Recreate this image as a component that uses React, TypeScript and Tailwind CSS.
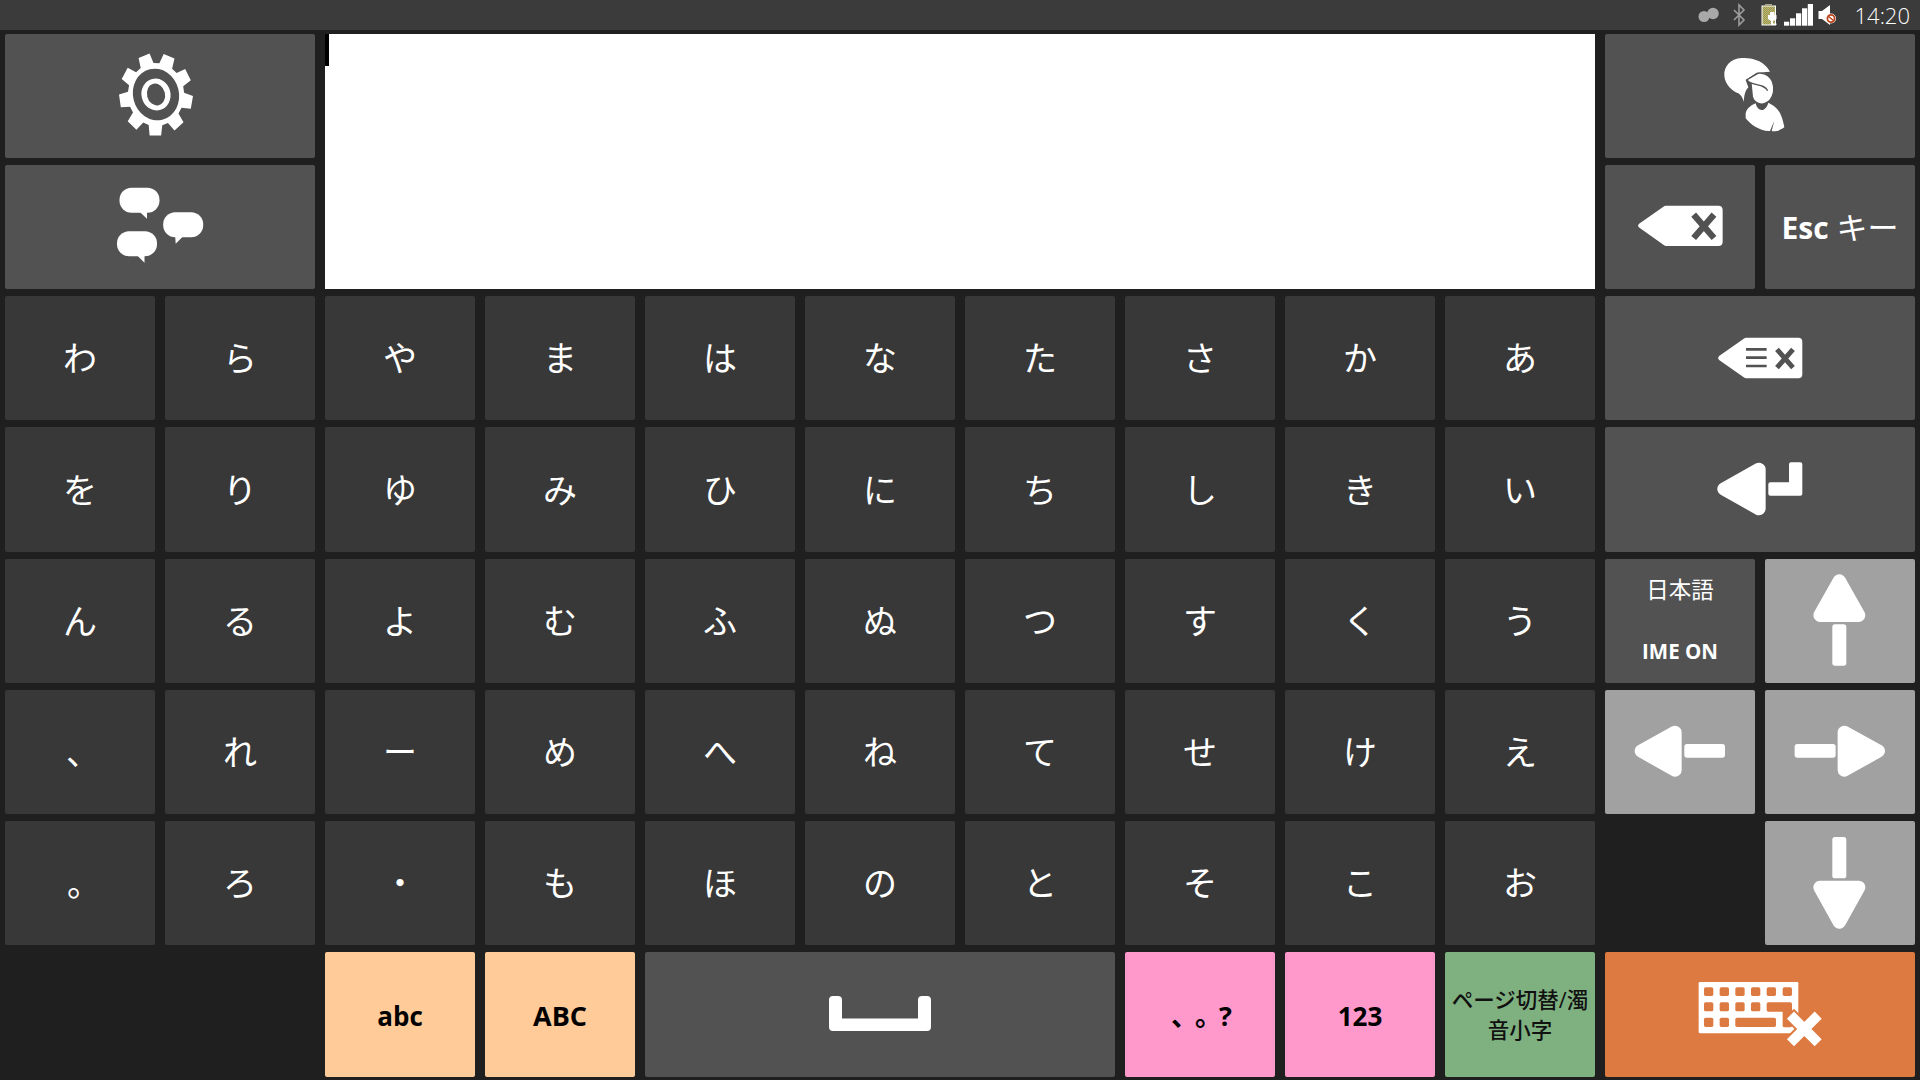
import type { ReactNode } from 'react'

const kanaRows = [
  ['わ', 'ら', 'や', 'ま', 'は', 'な', 'た', 'さ', 'か', 'あ'],
  ['を', 'り', 'ゆ', 'み', 'ひ', 'に', 'ち', 'し', 'き', 'い'],
  ['ん', 'る', 'よ', 'む', 'ふ', 'ぬ', 'つ', 'す', 'く', 'う'],
  ['、', 'れ', 'ー', 'め', 'へ', 'ね', 'て', 'せ', 'け', 'え'],
  ['。', 'ろ', '・', 'も', 'ほ', 'の', 'と', 'そ', 'こ', 'お'],
]

const DARK = '#525252'
const ORANGE = '#dd7a41'

// 9 toothed gear, squashed a bit like the original artwork
function gearPath(cx: number, cy: number, rx: number, ry: number) {
  const pts: string[] = []
  const at = (deg: number, r: number) => {
    const a = (deg * Math.PI) / 180
    return `${(cx + Math.cos(a) * rx * r).toFixed(1)} ${(cy + Math.sin(a) * ry * r).toFixed(1)}`
  }
  for (let i = 0; i < 9; i++) {
    const c = -109 + i * 40
    pts.push(at(c - 14, 0.76), at(c - 9, 1), at(c + 9, 1), at(c + 14, 0.76))
  }
  return `M${pts.join(' L')} Z`
}

function Key({ className, children }: { className: string; children?: ReactNode }) {
  return (
    <div className={`flex items-center justify-center rounded-[2px] overflow-hidden min-h-0 ${className}`}>
      {children}
    </div>
  )
}

// icons are drawn in the page's own pixel coordinates, box = key's rect
function Icon({ box, children }: { box: string; children: ReactNode }) {
  return (
    <svg viewBox={box} className="block w-full h-full" fill="#fff">
      {children}
    </svg>
  )
}

function Bubble({ x, y, tail }: { x: number; y: number; tail: string }) {
  return (
    <g transform={`translate(${x} ${y})`}>
      <rect width="40" height="25" rx="12" />
      <path d={tail} />
    </g>
  )
}

function StatusIcons() {
  return (
    <svg viewBox="1695 0 145 30" className="w-[145px] h-[30px] block">
      <defs>
        <pattern id="dither" width="2" height="2" patternUnits="userSpaceOnUse">
          <rect width="2" height="2" fill="#7ea65c" />
          <rect width="1" height="1" fill="#d8a765" />
          <rect x="1" y="1" width="1" height="1" fill="#d8a765" />
        </pattern>
      </defs>
      {/* link */}
      <g fill="#a9a9a9">
        <circle cx="1704" cy="16.5" r="5.5" />
        <circle cx="1713" cy="13.5" r="5.8" />
        <path d="M1704 16.5 L1713 13.5" stroke="#a9a9a9" strokeWidth="6" />
      </g>
      {/* bluetooth */}
      <path d="M1734 10 L1744 20 L1739 25 L1739 5 L1744 10 L1734 20" fill="none" stroke="#9c9c9c" strokeWidth="1.6" />
      {/* battery charging */}
      <rect x="1762" y="6" width="13.5" height="19" fill="url(#dither)" stroke="#fff" strokeWidth="1" />
      <rect x="1765" y="4" width="7" height="2" fill="#a9a98a" />
      <path d="M1770 12 V15 H1768 V19 L1771 21 V25 H1776.5 V23.5 H1773 V21 L1776.5 19 V15 H1774.5 V12 Z" fill="#fff" />
      {/* signal */}
      <rect x="1784" y="21.7" width="5.2" height="4" fill="#fff" />
      <rect x="1790" y="18.3" width="5.2" height="7.4" fill="#fff" />
      <rect x="1796" y="13.3" width="5.2" height="12.4" fill="#fff" />
      <rect x="1802" y="8.3" width="5.2" height="17.4" fill="#fff" />
      <rect x="1807.8" y="4" width="5.2" height="21.7" fill="#fff" />
      {/* muted speaker */}
      <path d="M1818.5 11 H1822 L1830 5 V25 L1822 19 H1818.5 Z" fill="#fff" />
      <circle cx="1831" cy="18.5" r="5" fill="#fff" />
      <circle cx="1831" cy="18.5" r="3.6" fill="none" stroke="#b9441f" strokeWidth="1.8" />
      <path d="M1828.5 16.5 L1833.5 20.5" stroke="#b9441f" strokeWidth="1.6" />
    </svg>
  )
}

export default function App() {
  return (
    <div className="h-screen w-full flex flex-col bg-[#1f1f1f] text-white font-['Open_Sans','Noto_Sans_CJK_JP',sans-serif] overflow-hidden">
      {/* status bar */}
      <div className="h-[30px] shrink-0 bg-[#3b3b3b] flex items-center justify-end pr-[10px]">
        <StatusIcons />
        <span className="ml-[15px] text-[22px] leading-[30px] font-light text-white">14:20</span>
      </div>

      <div className="flex-1 min-h-0 pt-[4px] pb-[3px] pl-[5px] grid grid-cols-[repeat(12,150px)] grid-rows-[124px_124px_124px_125px_124px_124px_124px_125px] gap-x-[10px] gap-y-[7px]">
        {/* settings */}
        <Key className="col-span-2 bg-[#525252]">
          <Icon box="5 34 310 124">
            <path d={gearPath(156, 94.5, 37, 41.5)} />
            <g transform="rotate(-14 156 94.5)">
              <ellipse cx="156" cy="94.5" rx="23" ry="26" fill={DARK} />
              <ellipse cx="156" cy="94.5" rx="14.5" ry="16" />
              <ellipse cx="156" cy="94.5" rx="9" ry="11" fill={DARK} />
            </g>
          </Icon>
        </Key>

        {/* text box */}
        <div className="col-span-8 row-span-2 bg-white">
          <div className="w-[4px] h-[32px] bg-black" />
        </div>

        {/* speaker */}
        <Key className="col-span-2 bg-[#525252]">
          <Icon box="1605 34 310 124">
            <g transform="translate(1715 50) scale(0.3333)">
              <path d="M165 65 C150 35 115 22 80 24 C45 26 26 50 28 78 C30 105 55 125 70 130 C78 135 84 145 86 156 C88 140 88 125 100 112 L92 90 L125 68 Z" />
              <path d="M95 90 L128 70 C150 66 172 80 176 110 C178 130 170 150 155 158 C140 168 118 160 112 140 L108 100 Z" stroke={DARK} strokeWidth="4" />
              <path d="M106 98 C125 106 150 104 158 122" fill="none" stroke={DARK} strokeWidth="4" />
              <path d="M92 190 C95 175 110 165 122 160 C128 187 152 187 160 158 C185 170 200 185 208 232 C190 245 178 245 170 243 L178 212 L165 243 C135 245 105 222 92 205 Z" />
            </g>
          </Icon>
        </Key>

        {/* phrases */}
        <Key className="col-span-2 bg-[#525252]">
          <Icon box="5 165 310 124">
            <Bubble x={119.5} y={187.7} tail="M20 24 L27.5 31 L27.5 24 Z" />
            <Bubble x={163.2} y={212.3} tail="M12 24 L12.5 31.5 L20 24 Z" />
            <Bubble x={117} y={231.3} tail="M20 24 L27.5 31.5 L27.5 24 Z" />
          </Icon>
        </Key>

        {/* backspace */}
        <Key className="bg-[#525252]">
          <Icon box="1605 165 150 124">
            <g transform="translate(1590 20) scale(0.3333)">
              <path d="M153 617 L228 565 H385 Q390 565 390 570 V665 Q390 670 385 670 H228 Z" stroke="#fff" strokeWidth="16" strokeLinejoin="round" />
              <path d="M311 584 L372 654 M372 584 L311 654" stroke={DARK} strokeWidth="19" fill="none" />
            </g>
          </Icon>
        </Key>

        {/* esc */}
        <Key className="bg-[#525252] text-[30px] font-bold whitespace-nowrap">
          <span>Esc</span>
          <span className="ml-[8px] font-normal text-[31px]">キー</span>
        </Key>

        {/* kana + right hand column */}
        {kanaRows.map((row, r) => (
          <KanaRow key={r} row={row} />
        )).flatMap((el, r) => [el, <RightSide key={`side-${r}`} row={r} />])}

        {/* bottom row */}
        <Key className="col-start-3 bg-[#ffcc99] text-black text-[26px] font-bold pt-[4px]">abc</Key>
        <Key className="bg-[#ffcc99] text-black text-[27px] font-bold pt-[4px]">ABC</Key>
        <Key className="col-span-3 bg-[#525252]">
          <Icon box="645 952 470 125">
            <path d="M829 1000 q0 -4 4 -4 h5 q4 0 4 4 v18.5 h76 v-18.5 q0 -4 4 -4 h5 q4 0 4 4 v27 q0 4 -4 4 h-94 q-4 0 -4 -4 Z" />
          </Icon>
        </Key>
        <Key className="bg-[#ff99cc] text-black text-[27px] font-bold whitespace-nowrap pt-[3px] tracking-[-3px] [text-spacing-trim:space-all]">、。?</Key>
        <Key className="bg-[#ff99cc] text-black text-[26px] font-bold pt-[4px]">123</Key>
        <Key className="bg-[#7fb080] text-[#111] text-[21.5px] leading-[30px] font-medium text-center whitespace-nowrap">
          <span>ページ切替/濁<br />音小字</span>
        </Key>
        <Key className="col-span-2 bg-[#dd7a41]">
          <Icon box="1605 952 310 125">
            <g transform="translate(1590 680) scale(0.3333)">
              <rect x="326" y="906" width="299" height="154" rx="4" />
              <g fill={ORANGE}>
                {[342, 389, 436, 483, 530, 578].map(x => (
                  <rect key={x} x={x} y="922" width="28" height="26" rx="5" />
                ))}
                {[342, 389, 436, 483].map(x => (
                  <rect key={x} x={x} y="967" width="28" height="27" rx="5" />
                ))}
                <path d="M535 967 H601 Q606 967 606 972 V1037 Q606 1042 601 1042 H583 Q578 1042 578 1037 V995 H535 Q530 995 530 990 V972 Q530 967 535 967 Z" />
                <rect x="342" y="1013" width="28" height="28" rx="5" />
                <rect x="389" y="1013" width="28" height="28" rx="5" />
                <rect x="436" y="1013" width="122" height="28" rx="5" />
              </g>
              <path d="M597 1001 L689 1093 M689 1001 L597 1093" stroke={ORANGE} strokeWidth="42" />
              <path d="M601.5 1005.5 L684.5 1088.5 M684.5 1005.5 L601.5 1088.5" stroke="#fff" strokeWidth="30" />
            </g>
          </Icon>
        </Key>
      </div>
    </div>
  )
}

function KanaRow({ row }: { row: string[] }) {
  return (
    <>
      {row.map(k => (
        <Key key={k} className="bg-[#383838] text-[34px] pb-[3px] font-['Noto_Sans_CJK_JP',sans-serif]">
          {k === '、' ? <span className="ml-[6px]">{k}</span> : k === '。' ? <span className="ml-[8px]">{k}</span> : k}
        </Key>
      ))}
    </>
  )
}

// rounded triangle: fat round-joined stroke round a smaller polygon
function Triangle({ points }: { points: string }) {
  return <polygon points={points} stroke="#fff" strokeWidth="40" strokeLinejoin="round" />
}

function RightSide({ row }: { row: number }) {
  if (row === 0) {
    return (
      <Key className="col-span-2 bg-[#525252]">
        <Icon box="1605 296 310 124">
          <g transform="translate(1590 290) scale(0.3333)">
            <path d="M393 204 L468 151 H625 Q629 151 629 155 V253 Q629 257 625 257 H468 Z" stroke="#fff" strokeWidth="16" strokeLinejoin="round" />
            <path d="M468 178 H530 M468 203 H530 M468 228 H530" stroke={DARK} strokeWidth="8" />
            <path d="M561 178 L609 233 M609 178 L561 233" stroke={DARK} strokeWidth="15" />
          </g>
        </Icon>
      </Key>
    )
  }
  if (row === 1) {
    return (
      <Key className="col-span-2 bg-[#525252]">
        <Icon box="1605 427 310 125">
          <g transform="translate(1590 290) scale(0.3333)">
            <Triangle points="402,597 507,538 507,656" />
            <path d="M603 517 h28 q6 0 6 6 v88 q0 6 -6 6 h-90 q-6 0 -6 -6 v-28 q0 -6 6 -6 h56 v-54 q0 -6 6 -6 Z" />
          </g>
        </Icon>
      </Key>
    )
  }
  if (row === 2) {
    return (
      <>
        <Key className="flex-col bg-[#525252]">
          <span className="text-[22.5px] leading-[30px] font-['Noto_Sans_CJK_JP',sans-serif] mt-[-3px] mb-[33px]">日本語</span>
          <span className="text-[20.5px] leading-[30px] font-bold">IME ON</span>
        </Key>
        <Key className="bg-[#a1a1a1]">
          <Icon box="1765 559 150 124">
            <g transform="translate(1590 290) scale(0.3333)">
              <Triangle points="748,873 690,976 806,976" />
              <rect x="727" y="1003" width="42" height="124" rx="8" />
            </g>
          </Icon>
        </Key>
      </>
    )
  }
  if (row === 3) {
    return (
      <>
        <Key className="bg-[#a1a1a1]">
          <Icon box="1605 690 150 124">
            <g transform="translate(1590 680) scale(0.3333)">
              <Triangle points="154,213 255,157 255,270" />
              <rect x="283" y="192" width="122" height="41" rx="8" />
            </g>
          </Icon>
        </Key>
        <Key className="bg-[#a1a1a1]">
          <Icon box="1765 690 150 124">
            <g transform="translate(1590 680) scale(0.3333)">
              <Triangle points="865,213 763,157 763,270" />
              <rect x="614" y="192" width="123" height="41" rx="8" />
            </g>
          </Icon>
        </Key>
      </>
    )
  }
  return (
    <Key className="col-start-12 bg-[#a1a1a1]">
      <Icon box="1765 821 150 124">
        <g transform="translate(1590 680) scale(0.3333)">
          <Triangle points="748,726 690,622 806,622" />
          <rect x="727" y="471" width="42" height="124" rx="8" />
        </g>
      </Icon>
    </Key>
  )
}
